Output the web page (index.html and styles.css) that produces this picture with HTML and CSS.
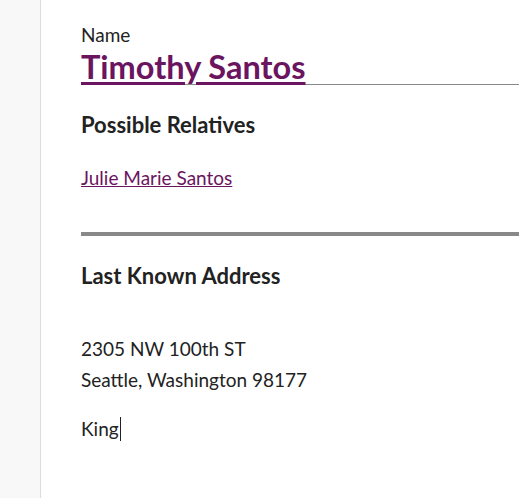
FILE: index.html
```html
<!DOCTYPE html>
<html>
<head>
<meta charset="utf-8">
<link rel="stylesheet" href="styles.css">
</head>
<body>
<div class="layout">
  <aside class="side"></aside>
  <main class="main">
    <div class="field-label">Name</div>
    <h1 class="name"><a href="#">Timothy Santos</a></h1>
    <h2 class="section-title">Possible Relatives</h2>
    <p class="relatives"><a href="#">Julie Marie Santos</a></p>
    <hr class="divider">
    <h2 class="section-title">Last Known Address</h2>
    <div class="address">
      <div>2305 NW 100th ST</div>
      <div>Seattle, Washington 98177</div>
    </div>
    <div class="county"><span>King</span><span class="caret"></span></div>
  </main>
</div>
</body>
</html>
```
FILE: styles.css
```css
html, body {
  margin: 0;
  padding: 0;
  height: 100%;
  background: #fff;
}
body {
  font-family: Lato, "Noto Sans", sans-serif;
  color: #222;
  overflow: hidden;
}
.layout {
  display: flex;
  height: 100%;
}
.side {
  width: 40px;
  flex: none;
  background: #f8f8f8;
  border-right: 1px solid #ddd;
}
.main {
  flex: 1;
  padding: 24px 0 0 40px;
  min-width: 0;
}
.field-label {
  font-size: 19px;
  line-height: 22px;
}
.name {
  margin: 4px 0 0;
  font-size: 32.5px;
  line-height: 34px;
  font-weight: 700;
  border-bottom: 1px solid #888;
}
.name a, .relatives a {
  color: #6b1460;
}
.name a {
  text-decoration-thickness: 3px;
  text-underline-offset: 3px;
}
.section-title {
  margin: 26px 0 0;
  font-size: 22px;
  line-height: 28px;
  font-weight: 700;
  color: #222;
}
.relatives {
  margin: 27px 0 0;
  font-size: 19px;
  line-height: 24px;
}
.divider {
  margin: 42px 0 0;
  border: 0;
  height: 4px;
  background: #888;
}
.divider + .section-title {
  margin-top: 26px;
}
.address {
  margin-top: 43px;
  font-size: 19px;
  line-height: 31px;
}
.county {
  margin-top: 22px;
  font-size: 19px;
  line-height: 24px;
  display: flex;
  align-items: center;
}
.caret {
  display: inline-block;
  width: 1px;
  height: 24px;
  margin-left: 1px;
  background: #222;
}
```
